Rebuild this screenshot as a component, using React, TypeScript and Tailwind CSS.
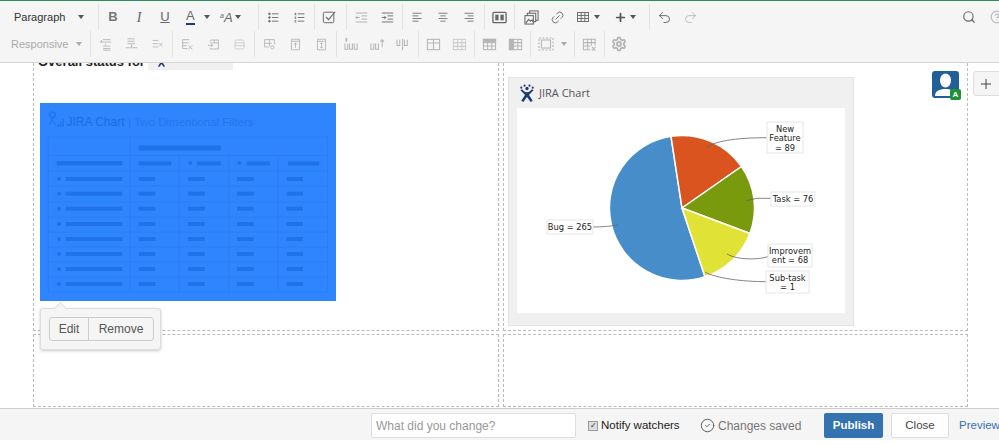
import type { ReactNode } from "react";
import { Undo2, Redo2, Search, Settings, Link2, Plus, CircleCheck, CircleHelp } from "lucide-react";

function Caret({ light }: { light?: boolean }) {
  return (
    <span
      className={
        light
          ? "inline-block border-x-[3.5px] border-t-[4px] border-x-transparent border-t-[#aaa]"
          : "inline-block border-x-[3.5px] border-t-[4px] border-x-transparent border-t-[#555]"
      }
    />
  );
}

function Sep() {
  return <span className="ml-[2px] mr-px h-[26px] w-px shrink-0 bg-[#e2e2e2]" />;
}

function Btn({ children }: { children: ReactNode }) {
  return <span className="flex h-[26px] w-[26px] shrink-0 items-center justify-center">{children}</span>;
}

function Ico({ children, size = 13 }: { children: ReactNode; size?: number }) {
  return (
    <svg width={size} height={size} viewBox="0 0 16 16" fill="none" stroke="currentColor" strokeWidth="1.1">
      {children}
    </svg>
  );
}

const lines = (ys: number[], x1: number, x2: number) =>
  ys.map((y) => <line key={y} x1={x1} x2={x2} y1={y} y2={y} />);

function Logo({ size }: { size: number }) {
  return (
    <svg width={size} height={size} viewBox="0 0 20 22" fill="#1d3c70">
      <circle cx="3" cy="4.500" r="1.300" />
      <circle cx="7" cy="2" r="1.300" />
      <circle cx="13" cy="2" r="1.300" />
      <circle cx="17" cy="4.500" r="1.300" />
      <circle cx="10" cy="5.500" r="2" />
      <path d="M2 7.500c2.500 3 4.500 4 5.500 6L3 20.500l2.500 1.500L10 16l4.500 6 2.500-1.500-4.500-7c1-2 3-3 5.500-6L16 6.500c-2 2.500-3.500 3.500-6 3.500S6 9 4 6.500z" />
    </svg>
  );
}

const tableRows = [76, 90.7, 105.7, 121, 136, 151, 166, 181];
const tableLines = [34, 52.7, 68, 83, 99, 114, 129, 144, 159, 174, 189];
const tableCols = [8.3, 90, 139, 189, 238, 287.7];

function MacroPlaceholder() {
  return (
    <svg width="296" height="198" viewBox="0 0 296 198" className="block">
      <rect width="296" height="198" fill="#2f85fd" />
      <g stroke="#1f74ec" strokeWidth="1.200" fill="none">
        <circle cx="12.500" cy="12" r="2.800" />
        <path d="M9 11l6.500 11M15.500 11L9 22" />
      </g>
      <g fill="#1f74ec">
        <rect x="17.500" y="21" width="1.300" height="3" />
        <rect x="20" y="18" width="1.300" height="6" />
        <rect x="22.500" y="16" width="1.300" height="8" />
      </g>
      <text x="26.500" y="23" fontSize="12" fill="#1a6ce4" fontFamily="Liberation Sans, sans-serif">JIRA Chart</text>
      <text x="88" y="23" fontSize="11.500" fill="#2277f0" fontFamily="Liberation Sans, sans-serif">| Two Dimentional Filters</text>
      <g stroke="#2a7ef6" strokeWidth="1">
        {tableLines.map((y) => <line key={y} x1="8.300" x2="287.700" y1={y} y2={y} />)}
        {tableCols.map((x, i) => <line key={x} x1={x} x2={x} y1={i === 0 || i === 1 || i === 5 ? 34 : 52.7} y2="189" />)}
      </g>
      <g fill="#1f72ea">
        <rect x="98.700" y="42.500" width="82.300" height="5" />
        <rect x="16.700" y="58" width="65.600" height="4.500" />
        <rect x="98.700" y="58.500" width="32.600" height="4" />
        <circle cx="150.300" cy="60" r="2" />
        <rect x="157" y="58.500" width="24" height="4" />
        <circle cx="199.300" cy="60" r="2" />
        <rect x="206.700" y="58.500" width="23.300" height="4" />
        <rect x="248" y="58.500" width="31.300" height="4" />
        {tableRows.map((y) => (
          <g key={y}>
            <circle cx="19" cy={y} r="2" />
            <rect x="25.700" y={y - 2} width="56.600" height="4" />
            <rect x="98.700" y={y - 2} width="16.600" height="4" />
            <rect x="148" y={y - 2} width="16.700" height="4" />
            <rect x="197" y={y - 2} width="16.700" height="4" />
            <rect x="246.700" y={y - 2} width="16.300" height="4" />
          </g>
        ))}
      </g>
    </svg>
  );
}

function ChartLabel({ x, y, w, h, rows }: { x: number; y: number; w: number; h: number; rows: string[] }) {
  const cx = x + w / 2;
  return (
    <g>
      <rect x={x} y={y} width={w} height={h} fill="#fff" stroke="#e6e6e6" />
      {rows.map((r, i) => (
        <text key={r} x={cx} y={y + 9.500 + i * 9.500} textAnchor="middle" fontSize="8.300" fill="#222" fontFamily="DejaVu Sans, sans-serif">
          {r}
        </text>
      ))}
    </g>
  );
}

function PieChart() {
  return (
    <svg width="328" height="205" viewBox="0 0 328 205" className="block bg-white">
      <g stroke="#fff" strokeWidth="1.500">
        <path d="M165 100L188 168.700A72.500 72.500 0 1 1 154 28.300Z" fill="#478dc9" />
        <path d="M165 100L154 28.300A72.500 72.500 0 0 1 224.500 58.500Z" fill="#d9541e" />
        <path d="M165 100L224.500 58.500A72.500 72.500 0 0 1 232.900 125.500Z" fill="#7a9a0e" />
        <path d="M165 100L232.900 125.500A72.500 72.500 0 0 1 188 168.700Z" fill="#e0e235" />
      </g>
      <g stroke="#666" strokeWidth="0.800" fill="none">
        <path d="M189.700 39.300C200 32 225 29.700 249.700 29.700" />
        <path d="M229 92.700L240 90.300H253.700" />
        <path d="M75.700 119C85 119 95 118 101 117" />
        <path d="M210 146C220 152 240 152 251 148.700" />
        <path d="M188 164C198 170 225 173.700 249.700 173.700" />
      </g>
      <ChartLabel x={250} y={14} w={36} h={31} rows={["New", "Feature", "= 89"]} />
      <ChartLabel x={254} y={84} w={44} h={14} rows={["Task = 76"]} />
      <ChartLabel x={30} y={112} w={46} h={14} rows={["Bug = 265"]} />
      <ChartLabel x={251} y={136} w={44} h={23} rows={["Improvem", "ent = 68"]} />
      <ChartLabel x={249} y={163} w={43} h={22} rows={["Sub-task", "= 1"]} />
    </svg>
  );
}

export default function App() {
  return (
    <div className="flex h-[445px] w-[999px] flex-col overflow-hidden bg-white font-['Liberation_Sans',sans-serif]">
      {/* editor toolbar */}
      <div className="relative z-20 h-[63px] shrink-0 border-t border-b border-t-[#2f8a5e] border-b-[#d5d5d5] bg-[#f5f5f5] pt-[3px] text-[#666]">
        <div className="flex h-[26px] items-center">
          <span className="flex w-[96px] shrink-0 items-center justify-between pl-[14px] pr-[12px] text-[11px] text-[#333]">
            Paragraph
            <Caret />
          </span>
          <Sep />
          <Btn><span className="text-[13px] font-bold text-[#777]">B</span></Btn>
          <Btn><span className="font-['Liberation_Serif',serif] text-[14px] italic">I</span></Btn>
          <Btn><span className="text-[13px] underline">U</span></Btn>
          <span className="flex w-[37px] shrink-0 items-center gap-[9px] pl-[8px]">
            <span className="border-b-2 border-[#1d3c70] text-[13px] leading-[14px]">A</span>
            <Caret />
          </span>
          <span className="flex w-[35px] shrink-0 items-center gap-[2px] pl-[5px]">
            <span className="text-[13px] italic leading-none"><sup className="text-[7px]">a</sup>A</span>
            <Caret />
          </span>
          <span className="w-[6px] shrink-0" />
          <Sep />
          <Btn>
            <Ico>
              {lines([3.500, 8, 12.500], 6, 14)}
              <circle cx="3" cy="3.500" r="1" fill="currentColor" />
              <circle cx="3" cy="8" r="1" fill="currentColor" />
              <circle cx="3" cy="12.500" r="1" fill="currentColor" />
            </Ico>
          </Btn>
          <Btn>
            <Ico>
              {lines([3.500, 8, 12.500], 6, 14)}
              {lines([3, 4.500, 7.500, 9, 12, 13.500], 2, 4)}
            </Ico>
          </Btn>
          <Sep />
          <Btn>
            <Ico size={14}>
              <rect x="1.500" y="2.500" width="12" height="12" rx="1.500" />
              <path d="M4.500 8l3 3L15 2" strokeWidth="1.300" />
            </Ico>
          </Btn>
          <span className="w-[2px] shrink-0" />
          <Sep />
          <Btn>
            <span className="text-[#aaa]">
              <Ico>
                {lines([2.500, 13.500], 1, 15)}
                {lines([6, 10], 8, 15)}
                <path d="M6 8H1M3 6L1 8l2 2" />
              </Ico>
            </span>
          </Btn>
          <Btn>
            <Ico>
              {lines([2.500, 13.500], 1, 15)}
              {lines([6, 10], 8, 15)}
              <path d="M1 8h5M4 6l2 2-2 2" />
            </Ico>
          </Btn>
          <Sep />
          <Btn>
            <Ico size={12}>{lines([3, 10], 2, 14)}{lines([6.500, 13.500], 2, 10)}</Ico>
          </Btn>
          <Btn>
            <Ico size={12}>
              {lines([3, 10], 2, 14)}
              {lines([6.500, 13.500], 4.500, 11.500)}
            </Ico>
          </Btn>
          <Btn>
            <Ico size={12}>
              {lines([3, 10], 2, 14)}
              {lines([6.500, 13.500], 6, 14)}
            </Ico>
          </Btn>
          <Sep />
          <Btn>
            <Ico size={15}>
              <rect x="1" y="2.500" width="14" height="11" rx="1" strokeWidth="1.400" />
              <rect x="3.500" y="5" width="3.500" height="6" fill="currentColor" stroke="none" />
              <rect x="9" y="5" width="3.500" height="6" fill="currentColor" stroke="none" />
            </Ico>
          </Btn>
          <Sep />
          <span className="w-[2px] shrink-0" />
          <Btn>
            <Ico size={15}>
              <rect x="6" y="1" width="9" height="10" />
              <rect x="3.500" y="3.500" width="9" height="9" fill="#f5f5f5" />
              <rect x="1" y="6" width="9" height="9" fill="#f5f5f5" />
              <path d="M2 14l3-4 2 2 1.500-1.500L10 13" />
            </Ico>
          </Btn>
          <Btn><Link2 size={15} strokeWidth={1.400} className="-rotate-45" /></Btn>
          <span className="flex w-[40px] shrink-0 items-center gap-[5px] pl-[7px]">
            <svg width="12" height="10" viewBox="0 0 13 11" fill="none" stroke="currentColor">
              <rect x="0.500" y="0.500" width="12" height="10" />
              <path d="M4.500 0v11M8.500 0v11M0 3.800h13M0 7.200h13" />
            </svg>
            <Caret />
          </span>
          <span className="flex w-[35px] shrink-0 items-center gap-[3px] pl-[4px]">
            <Plus size={13} strokeWidth={3.200} className="text-[#555]" />
            <Caret />
          </span>
          <span className="w-[2px] shrink-0" />
          <Sep />
          <Btn><Undo2 size={15} strokeWidth={1.500} /></Btn>
          <Btn><Redo2 size={15} strokeWidth={1.500} className="text-[#bbb]" /></Btn>
          <span className="ml-auto flex w-[43px] shrink-0 items-center gap-[14px] pl-[6px]">
            <Search size={14} strokeWidth={2} className="shrink-0" />
            <CircleHelp size={14} className="shrink-0 text-[#bbb]" />
          </span>
        </div>
        <div className="mt-px flex h-[26px] items-center text-[#b5b5b5]">
          <span className="flex w-[88px] shrink-0 items-center gap-[8px] pl-[11px] text-[11px] text-[#aaa]">
            Responsive
            <Caret light />
          </span>
          <Sep />
          <Btn><Ico>{lines([2, 10, 13, 15], 5, 14)}<path d="M1 5h14M3 2.500V5M8 7v2" /></Ico></Btn>
          <Btn><Ico>{lines([1, 4, 7], 3, 12)}<path d="M8 8v3M1 12h14" /></Ico></Btn>
          <Btn><Ico>{lines([3, 7, 11], 2, 9)}<path d="M10 6l4 4M14 6l-4 4" /></Ico></Btn>
          <Sep />
          <Btn><Ico><path d="M10 2H2v11h6M2 6h7M2 9.500h5" /><path d="M9 9l5 5M14 9l-5 5" /></Ico></Btn>
          <Btn><Ico><path d="M4 4V2.500h10v11H4V12M4 6h10M9 2.500V6" /><path d="M1 9h6M5 7l2 2-2 2" /></Ico></Btn>
          <Btn><span className="text-[#ccc]"><Ico><rect x="2.500" y="2.500" width="11" height="11" rx="2" /><path d="M2.500 6h11M1 9.500h14" /></Ico></span></Btn>
          <Sep />
          <Btn><Ico><path d="M14 8V2H2v9h5M8 2v8M2 6.500h9" /><circle cx="11.500" cy="11.500" r="2" /></Ico></Btn>
          <Btn><Ico><path d="M3 1.500h10v13H3zM3 4h10" /><path d="M8 12V6M6 8l2-2 2 2" /></Ico></Btn>
          <Btn><Ico><path d="M3 1.500h10v13H3zM3 4h10" /><path d="M8 5.500v7M6.500 7L8 5.500 9.500 7M6.500 11L8 12.500 9.500 11" /></Ico></Btn>
          <Sep />
          <Btn><Ico size={15}><path d="M1 7v6h3V7M6 7v6h3V7M11 7v6h3V7" /><path d="M2.500 1v4" strokeWidth="1.800" /></Ico></Btn>
          <Btn><Ico size={15}><path d="M1 7v6h3V7M6 7v6h3V7" /><path d="M13 3v8M11 5l2-2 2 2" /></Ico></Btn>
          <Btn><Ico size={15}><path d="M1 3v6h3V3M9 3v6h3V3" /><path d="M7 2v12" /></Ico></Btn>
          <Sep />
          <Btn><Ico size={15}><rect x="1.500" y="2.500" width="13" height="11" /><path d="M1.500 6.500h13M8 2.500v11" /></Ico></Btn>
          <Btn><span className="text-[#ccc]"><Ico size={15}><rect x="1.500" y="2.500" width="13" height="11" /><path d="M1.500 6h13M1.500 10h13M6 2.500v11M10.500 2.500v11" /></Ico></span></Btn>
          <Sep />
          <Btn><Ico size={15}><rect x="1.500" y="2.500" width="13" height="11" /><rect x="1.500" y="2.500" width="13" height="3.500" fill="currentColor" /><path d="M6 6v7M10.500 6v7M1.500 9.500h13" /></Ico></Btn>
          <Btn><Ico size={15}><rect x="1.500" y="2.500" width="13" height="11" /><rect x="1.500" y="2.500" width="4.500" height="11" fill="currentColor" /><path d="M10.500 2.500v11M6 6h8.500M6 9.500h8.500" /></Ico></Btn>
          <Sep />
          <span className="flex w-[40px] shrink-0 items-center gap-[7px] pl-[6px]">
            <Ico size={16}><rect x="3.500" y="4" width="9" height="8" /><path d="M1 2h14v12H1z" strokeDasharray="2 1.500" /></Ico>
            <Caret light />
          </span>
          <Sep />
          <Btn><Ico size={15}><path d="M14 9V2.500H1.500v11H9M1.500 6h12.500M6 2.500V13M10 2.500V9M1.500 9.500H9" /><path d="M10.500 10.500l4 4M14.500 10.500l-4 4" /></Ico></Btn>
          <Sep />
          <Btn><Settings size={16} strokeWidth={2.800} /></Btn>
        </div>
      </div>

      {/* page layout cells */}
      <div className="relative z-10 h-[345px] shrink-0 overflow-hidden">
        <div className="-mt-[30px] ml-[33px] grid w-[935px] grid-cols-[466px_465px] grid-rows-[298px_73px] gap-x-[4px] gap-y-[3px]">
          <div className="border border-dashed border-[#bbb] pl-[4px] pt-[18px]">
            <div className="flex h-[20px] text-[13px] font-bold leading-[20px] text-[#222]">
              Overall status for
              <span className="ml-[3px] flex h-[18px] w-[85px] items-center bg-[#f0f0f0] pl-[8px]">
                <Logo size={11} />
              </span>
            </div>
            <div className="ml-[2px] mt-[31px] w-[296px]">
              <MacroPlaceholder />
            </div>
          </div>
          <div className="border border-dashed border-[#bbb] pl-[4px] pt-[43px]">
            <div className="h-[249px] w-[346px] border border-[#e4e4e4] bg-[#f0f0f0] px-[8px]">
              <div className="flex h-[30px] items-center gap-[3px] pl-px text-[#555]">
                <Logo size={18} />
                <span className="font-['Open_Sans',sans-serif] text-[11px]">JIRA Chart</span>
              </div>
              <PieChart />
            </div>
          </div>
          <div className="border border-dashed border-[#bbb]" />
          <div className="border border-dashed border-[#bbb]" />
        </div>

        {/* macro property panel */}
        <div className="absolute left-[40px] top-[245px] h-[42px] w-[121px] rounded-[3px] border border-[#ddd] bg-[#f5f5f5] p-[8px] shadow-[0_1px_3px_rgba(0,0,0,0.2)]">
          <span className="absolute -top-[5px] left-[15px] h-[9px] w-[9px] rotate-45 border-l border-t border-[#ddd] bg-[#f5f5f5]" />
          <div className="relative flex h-[24px] w-[105px] rounded-[3px] border border-[#ccc] text-[12px] text-[#555]">
            <span className="flex w-[39px] items-center justify-center border-r border-[#ccc]">Edit</span>
            <span className="flex flex-1 items-center justify-center">Remove</span>
          </div>
        </div>

        {/* avatar and add button */}
        <div className="absolute left-[932px] top-[8px] h-[27px] w-[27px] rounded-[3px] bg-[#205f97]">
          <svg width="27" height="27" viewBox="0 0 27 27" fill="#fff">
            <ellipse cx="13.500" cy="9.500" rx="5.500" ry="7" />
            <path d="M3 25c0-5 4-6 8-7h5c4 1 8 2 8 7z" />
          </svg>
          <span className="absolute -bottom-[2px] -right-[2px] flex h-[11px] w-[11px] items-center justify-center rounded-[2px] bg-[#1f9137] text-[8px] font-bold text-white">
            A
          </span>
        </div>
        <div className="absolute left-[973px] top-[8px] flex h-[25px] w-[30px] items-center rounded-[3px] border border-[#ddd] bg-[#f5f5f5] pl-[4px] text-[#444]">
          <Plus size={16} strokeWidth={1.500} />
        </div>
      </div>

      {/* save bar */}
      <div className="flex h-[32px] shrink-0 items-center border-t border-[#ccc] bg-[#f5f5f5] pt-[2px] text-[12px]">
        <div className="ml-[371px] flex h-[25px] w-[205px] shrink-0 items-center rounded-[2px] border border-[#ddd] bg-white pl-[4px] text-[#999]">
          What did you change?
        </div>
        <span className="ml-[12px] flex h-[10px] w-[10px] shrink-0 items-center justify-center border border-[#999] bg-[#ddd] text-[8px] leading-none text-[#333]">
          ✓
        </span>
        <span className="ml-[3px] w-[78px] shrink-0 whitespace-nowrap text-[11.500px] text-[#222]">Notify watchers</span>
        <CircleCheck size={15} strokeWidth={1.500} className="ml-[21px] shrink-0 text-[#555]" />
        <span className="ml-[3px] w-[83px] shrink-0 whitespace-nowrap text-[#777]">Changes saved</span>
        <span className="ml-[23px] flex h-[25px] w-[59px] shrink-0 items-center justify-center rounded-[2px] bg-[#3572b0] text-[11.500px] font-bold text-white">
          Publish
        </span>
        <span className="ml-[8px] flex h-[25px] w-[58px] shrink-0 items-center justify-center rounded-[2px] border border-[#ddd] bg-white text-[11.500px] text-[#444]">
          Close
        </span>
        <span className="ml-[10px] shrink-0 text-[11.500px] text-[#3572b0]">Preview</span>
      </div>
      <div className="h-[5px] shrink-0 bg-white" />
    </div>
  );
}
